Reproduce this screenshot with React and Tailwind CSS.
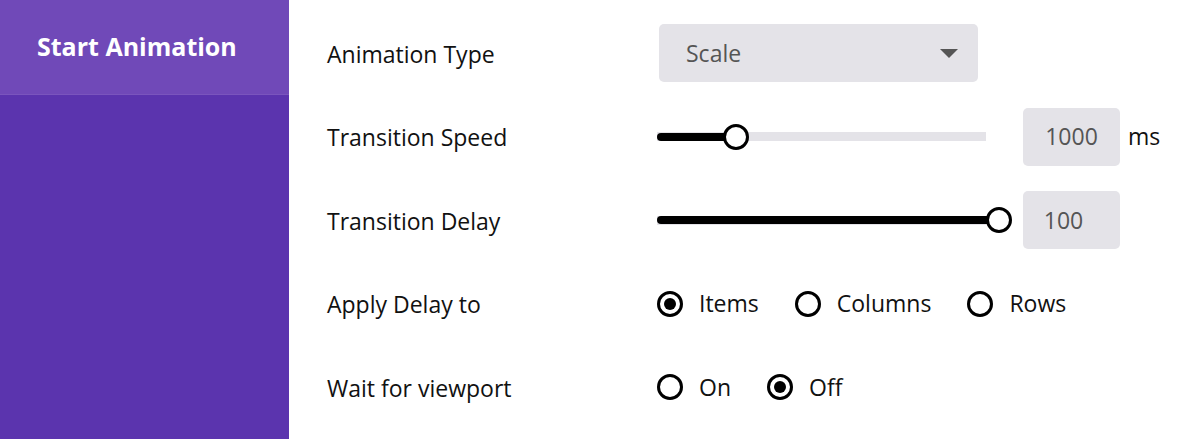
import React from 'react'

const font = { fontFamily: '"Open Sans", "Liberation Sans", sans-serif' }

function Radio({ label, checked }) {
  return (
    <label className="flex items-center gap-[16px]">
      <span className="flex h-[26px] w-[26px] items-center justify-center rounded-full border-[3px] border-black bg-white">
        {checked && <span className="h-[12px] w-[12px] rounded-full bg-black" />}
      </span>
      <span className="text-[23px] text-[#111]">{label}</span>
    </label>
  )
}

function Slider({ pos, grayEnd }) {
  // pos: thumb center in px from track start
  return (
    <div className="relative h-[26px] w-[343px]">
      <div className="absolute left-0 top-[8.5px] h-[9px] bg-[#e4e3e8]" style={{ width: grayEnd }} />
      <div className="absolute left-0 top-[9px] h-[8px] rounded-full bg-black" style={{ width: pos }} />
      <div
        className="absolute top-0 h-[26px] w-[26px] rounded-full border-[3px] border-black bg-white"
        style={{ left: pos - 13 }}
      />
    </div>
  )
}

function Row({ label, children }) {
  return (
    <div className="flex h-[58px] items-center">
      <div className="w-[330px] pt-[2px] text-[23px] text-[#111]">{label}</div>
      <div className="flex items-center">{children}</div>
    </div>
  )
}

export default function App() {
  return (
    <div className="flex h-[439px] w-[1180px] bg-white" style={font}>
      {/* Sidebar */}
      <div className="w-[289px] bg-[#5b34ae]">
        <div className="flex h-[95px] items-center pl-[37px] border-b border-[#7a55bd] bg-[#7049b8]">
          <span className="text-[25px] font-bold text-white">Start Animation</span>
        </div>
      </div>

      {/* Settings */}
      <div className="flex flex-1 flex-col gap-[25.5px] pl-[38px] pt-[24px]">
        <Row label="Animation Type">
          <div className="ml-[2px] flex h-[58px] w-[319px] items-center justify-between rounded-[5px] bg-[#e4e3e8] pl-[27px] pr-[20px]">
            <span className="text-[23px] text-[#555]">Scale</span>
            <svg width="18" height="9" viewBox="0 0 18 9">
              <path d="M0 0 L18 0 L9 9 Z" fill="#555" />
            </svg>
          </div>
        </Row>
        <Row label="Transition Speed">
          <Slider pos={79} grayEnd={329} />
          <div className="ml-[23px] flex h-[58px] w-[97px] items-center justify-center rounded-[5px] bg-[#e4e3e8] text-[23px] text-[#555]">
            1000
          </div>
          <span className="ml-[8px] text-[23px] text-[#111]">ms</span>
        </Row>
        <Row label="Transition Delay">
          <Slider pos={342} grayEnd={329} />
          <div className="ml-[23px] flex h-[58px] w-[97px] items-center justify-center rounded-[5px] bg-[#e4e3e8] pr-[16px] text-[23px] text-[#555]">
            100
          </div>
        </Row>
        <Row label="Apply Delay to">
          <div className="flex items-center gap-[36px]">
            <Radio label="Items" checked />
            <Radio label="Columns" />
            <Radio label="Rows" />
          </div>
        </Row>
        <Row label="Wait for viewport">
          <div className="flex items-center gap-[36px]">
            <Radio label="On" />
            <Radio label="Off" checked />
          </div>
        </Row>
      </div>
    </div>
  )
}
